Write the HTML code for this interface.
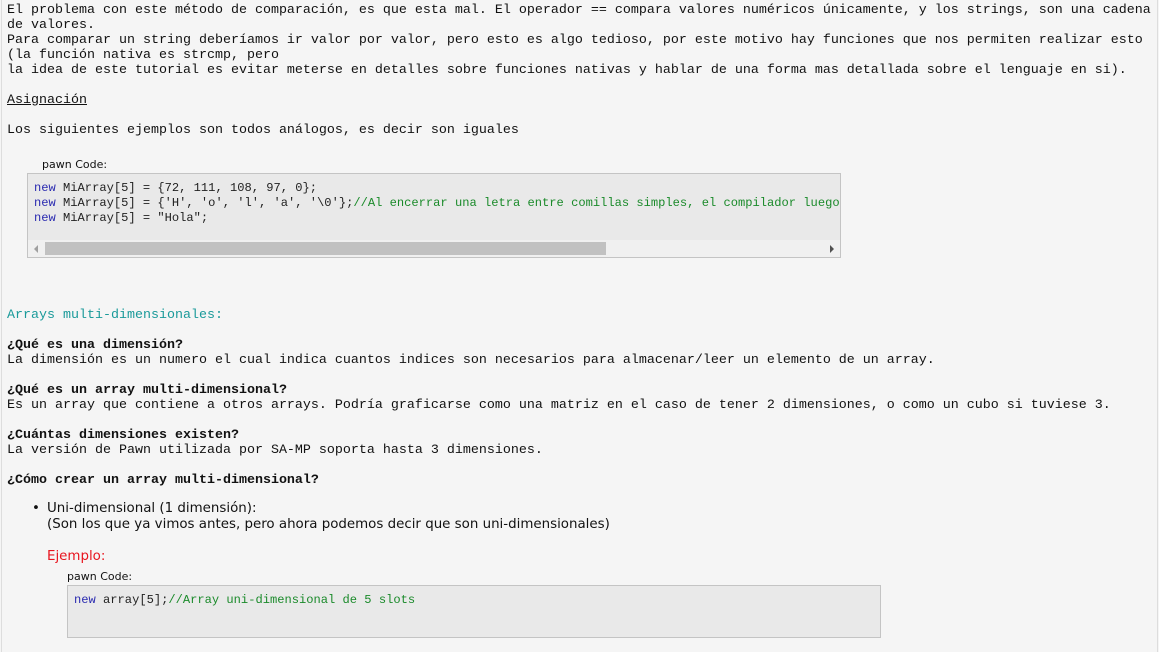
<!DOCTYPE html>
<html><head><meta charset="utf-8"><style>
body{margin:0;width:1159px;height:652px;background:#f5f5f5;position:relative;overflow:hidden}
.frame{position:absolute;left:1px;top:0;width:1155px;height:652px;border-left:1px solid #ddd;border-right:1px solid #ddd}
.t{position:absolute;left:7px;font-family:"Liberation Mono",monospace;font-size:13.33px;line-height:15px;color:#111;white-space:pre}
.b{font-weight:bold}
.lbl{position:absolute;font-family:"DejaVu Sans","Liberation Sans",sans-serif;font-size:11px;color:#111}
.box{position:absolute;background:#e9e9e9;border:1px solid #c4c4c4;overflow:hidden}
.code{position:absolute;font-family:"Liberation Mono",monospace;font-size:12.1px;line-height:15px;color:#222;white-space:pre}
.k{color:#2a2ab0}.c{color:#1a8a2a}
.s{position:absolute;font-family:"DejaVu Sans","Liberation Sans",sans-serif;font-size:13.4px;line-height:16px;color:#111;white-space:pre}
</style></head><body>
<div class="frame"></div>
<div class="t" style="top:3px">El problema con este método de comparación, es que esta mal. El operador == compara valores numéricos únicamente, y los strings, son una cadena
de valores.
Para comparar un string deberíamos ir valor por valor, pero esto es algo tedioso, por este motivo hay funciones que nos permiten realizar esto
(la función nativa es strcmp, pero
la idea de este tutorial es evitar meterse en detalles sobre funciones nativas y hablar de una forma mas detallada sobre el lenguaje en si).</div>
<div class="t" style="top:93px;text-decoration:underline">Asignación</div>
<div class="t" style="top:123px">Los siguientes ejemplos son todos análogos, es decir son iguales</div>
<div class="lbl" style="left:42px;top:158px">pawn Code:</div>
<div class="box" style="left:27px;top:173px;width:812px;height:83px">
<div class="code" style="left:6px;top:7px"><span class="k">new</span> MiArray[5] = {72, 111, 108, 97, 0};
<span class="k">new</span> MiArray[5] = {'H', 'o', 'l', 'a', '\0'};<span class="c">//Al encerrar una letra entre comillas simples, el compilador luego lo reemplaza</span>
<span class="k">new</span> MiArray[5] = "Hola";</div>
<div style="position:absolute;left:0;top:66px;width:812px;height:17px;background:#f0f0f0"></div>
<div style="position:absolute;left:17px;top:68px;width:561px;height:13px;background:#c1c1c1"></div>
<div style="position:absolute;left:6px;top:71px;width:0;height:0;border-top:4px solid transparent;border-bottom:4px solid transparent;border-right:4px solid #a0a0a0"></div>
<div style="position:absolute;left:802px;top:71px;width:0;height:0;border-top:4px solid transparent;border-bottom:4px solid transparent;border-left:4px solid #505050"></div>
</div>
<div class="t" style="top:308px;color:#1a9a9a">Arrays multi-dimensionales:</div>
<div class="t" style="top:338px"><span class="b">¿Qué es una dimensión?</span>
La dimensión es un numero el cual indica cuantos indices son necesarios para almacenar/leer un elemento de un array.

<span class="b">¿Qué es un array multi-dimensional?</span>
Es un array que contiene a otros arrays. Podría graficarse como una matriz en el caso de tener 2 dimensiones, o como un cubo si tuviese 3.

<span class="b">¿Cuántas dimensiones existen?</span>
La versión de Pawn utilizada por SA-MP soporta hasta 3 dimensiones.

<span class="b">¿Cómo crear un array multi-dimensional?</span></div>
<div class="s" style="left:32px;top:501px">•</div>
<div class="s" style="left:47px;top:501px">Uni-dimensional (1 dimensión):
(Son los que ya vimos antes, pero ahora podemos decir que son uni-dimensionales)</div>
<div class="s" style="left:47px;top:549px;color:#e8141e">Ejemplo:</div>
<div class="lbl" style="left:67px;top:570px">pawn Code:</div>
<div class="box" style="left:67px;top:585px;width:812px;height:51px">
<div class="code" style="left:6px;top:7px"><span class="k">new</span> array[5];<span class="c">//Array uni-dimensional de 5 slots</span></div>
</div>
</body></html>
